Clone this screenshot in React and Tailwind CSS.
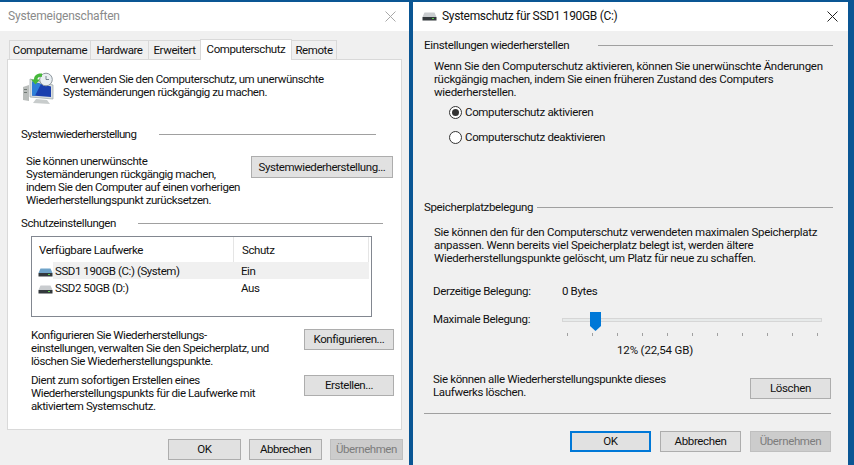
const font = "font-['Roboto',sans-serif] text-[11.5px] leading-[13px] text-[#111] whitespace-nowrap";

function Btn({ w, h = 'h-[21px]', children, disabled, primary, cls = '' }) {
  const tone = disabled
    ? 'bg-[#cccccc] border-[#bfbfbf] text-[#7c7c7c]'
    : primary
      ? 'bg-[#e1e1e1] border-[#0078d7] border-2 text-[#111]'
      : 'bg-[#e1e1e1] border-[#adadad] text-[#111]';
  return (
    <div className={`flex items-center justify-center border ${tone} ${w} ${h} ${cls} shrink-0`}>{children}</div>
  );
}

function Heading({ children, labelClass, lineClass, cls = '' }) {
  return (
    <div className={`flex items-center h-[13px] ${cls}`}>
      <span className={`shrink-0 ${labelClass}`}>{children}</span>
      <div className={`h-px bg-[#a0a0a0] ${lineClass}`} />
    </div>
  );
}

function Drive({ blue }) {
  const top = blue ? '#6fa3c9' : '#c9cccf';
  return (
    <svg width="15" height="9" viewBox="0 0 15 9" className="shrink-0">
      <path d="M2.5 0.5H12.5L14.5 5H0.5Z" fill={top} />
      <rect x="0.5" y="5" width="14" height="3.5" fill="#33383c" />
      <rect x="10" y="6" width="2" height="1" fill="#5fd04f" />
    </svg>
  );
}

function SysIcon() {
  return (
    <svg width="32" height="34" viewBox="0 0 32 34" className="shrink-0">
      <path d="M1 16 L7 14 V30 L1 29Z" fill="#b9bdbb" />
      <rect x="2" y="18" width="3" height="1" fill="#6f7773" />
      <rect x="2" y="21" width="3" height="1" fill="#6f7773" />
      <path d="M8 8 L31 14 V28 L8 26Z" fill="#d9dedf" stroke="#9aa3a6" strokeWidth="0.7" />
      <path d="M10 10.5 L29 15.5 V26 L10 24.5Z" fill="#1a3fae" />
      <path d="M10 10.5 L19 13 L13 24.7 L10 24.5Z" fill="#2f7fd8" />
      <path d="M14 28 L25 29 L28 33 L11 32Z" fill="#c8cccc" />
      <circle cx="24" cy="8.5" r="6.3" fill="#e9eef2" stroke="#8d979d" strokeWidth="1" />
      <path d="M24 5V8.5H27" fill="none" stroke="#5c6a75" strokeWidth="0.8" />
      <path d="M20 2.5 C15 2 12 4.5 12 8.5 L9 8.5 L13.5 13.5 L18 8.5 L15.5 8.5 C15.5 6.5 17 5.5 20 6Z" fill="#46b83a" />
    </svg>
  );
}

function Radio({ checked, children, cls = '' }) {
  return (
    <div className={`flex items-center ${cls}`}>
      <div className="w-[13px] h-[13px] rounded-full border border-[#333] bg-white flex items-center justify-center shrink-0">
        {checked && <div className="w-[7px] h-[7px] rounded-full bg-[#333]" />}
      </div>
      <span className="ml-[3px]">{children}</span>
    </div>
  );
}

function Close({ color }) {
  return (
    <svg width="11" height="11" viewBox="0 0 11 11" className="shrink-0">
      <path d="M0.5 0.5L10.5 10.5M10.5 0.5L0.5 10.5" stroke={color} strokeWidth="1" fill="none" />
    </svg>
  );
}

function Tab({ children, w, active }) {
  return active ? (
    <div className={`${w} h-[21px] bg-white border border-b-0 border-[#d9d9d9] -ml-px flex items-center justify-center relative z-10 -mb-px pb-[2px]`}>{children}</div>
  ) : (
    <div className={`${w} h-[19px] bg-[#f0f0f0] border border-b-0 border-[#d9d9d9] -ml-px flex items-center justify-center`}>{children}</div>
  );
}

function LeftWindow() {
  return (
    <div className="w-[409px] h-full flex flex-col shrink-0 tracking-[-0.43px]">
      <div className="h-[29px] bg-white flex items-center justify-between pl-[8px] pr-[13px] shrink-0">
        <span className="text-[#8a8a8a] text-[12px] tracking-[-0.2px]">Systemeigenschaften</span>
        <Close color="#a8a8a8" />
      </div>
      <div className="flex-1 bg-[#f0f0f0] pl-[7px] pr-[8px] pt-[7px] flex flex-col">
        <div className="flex items-end pl-[3px] h-[21px] shrink-0">
          <Tab w="w-[82px]">Computername</Tab>
          <Tab w="w-[59px]">Hardware</Tab>
          <Tab w="w-[53px]">Erweitert</Tab>
          <Tab w="w-[92px]" active>Computerschutz</Tab>
          <Tab w="w-[46px]">Remote</Tab>
        </div>
        <div className="w-[395px] h-[371px] bg-white border border-[#d9d9d9] flex flex-col shrink-0">
          <div className="flex items-start pl-[14px] pt-[11px] h-[61px] shrink-0">
            <SysIcon />
            <div className="ml-[9px] pt-[2px]">
              Verwenden Sie den Computerschutz, um unerwünschte<br />
              Systemänderungen rückgängig zu machen.
            </div>
          </div>
          <Heading cls="pl-[13px] mt-[7px] tracking-[-0.6px]" labelClass="w-[138px]" lineClass="w-[217px]">Systemwiederherstellung</Heading>
          <div className="flex justify-between pl-[18px] pr-[8px] mt-[9px] items-start">
            <div className="pt-[5px]">
              Sie können unerwünschte<br />
              Systemänderungen rückgängig machen,<br />
              indem Sie den Computer auf einen vorherigen<br />
              Wiederherstellungspunkt zurücksetzen.
            </div>
            <Btn w="w-[142px]" h="h-[22px]" cls="mt-[6px]">Systemwiederherstellung...</Btn>
          </div>
          <Heading cls="pl-[13px] mt-[10px]" labelClass="w-[117px]" lineClass="w-[245px]">Schutzeinstellungen</Heading>
          <div className="ml-[23px] mt-[6px] w-[341px] h-[81px] border border-[#828790] bg-white shrink-0 flex flex-col">
            <div className="flex h-[25px] items-center shrink-0 pr-[2px]">
              <div className="w-[202px] pl-[7px] pt-[2px] h-full flex items-center border-r border-[#e5e5e5]">Verfügbare Laufwerke</div>
              <div className="flex-1 pl-[8px] pt-[2px] h-full flex items-center border-r border-[#e5e5e5]">Schutz</div>
            </div>
            <div className="flex h-[17px] items-center">
              <div className="w-[21px] pl-[6px] pt-[3px] shrink-0"><Drive blue /></div>
              <div className="flex-1 flex items-center h-full bg-[#f0f0f0] mr-[2px] pt-[2px]">
                <div className="w-[188px] pl-[2px]">SSD1 190GB (C:) (System)</div>
                <div>Ein</div>
              </div>
            </div>
            <div className="flex h-[17px] items-center">
              <div className="w-[21px] pl-[6px] pt-[3px] shrink-0"><Drive /></div>
              <div className="flex-1 flex items-center h-full pt-[2px]">
                <div className="w-[188px] pl-[2px]">SSD2 50GB (D:)</div>
                <div>Aus</div>
              </div>
            </div>
          </div>
          <div className="flex justify-between pl-[23px] pr-[7px] mt-[12px] items-start">
            <div>
              Konfigurieren Sie Wiederherstellungs-<br />
              einstellungen, verwalten Sie den Speicherplatz, und<br />
              löschen Sie Wiederherstellungspunkte.
            </div>
            <Btn w="w-[90px]">Konfigurieren...</Btn>
          </div>
          <div className="flex justify-between pl-[23px] pr-[7px] mt-[6px] items-start">
            <div>
              Dient zum sofortigen Erstellen eines<br />
              Wiederherstellungspunkts für die Laufwerke mit<br />
              aktiviertem Systemschutz.
            </div>
            <Btn w="w-[90px]" cls="mt-[1px]">Erstellen...</Btn>
          </div>
        </div>
        <div className="flex justify-end gap-[8px] mt-[9px] w-[396px]">
          <Btn w="w-[73px]">OK</Btn>
          <Btn w="w-[73px]">Abbrechen</Btn>
          <Btn w="w-[73px]" disabled>Übernehmen</Btn>
        </div>
      </div>
    </div>
  );
}

const ticks = [0, 1, 2, 3, 4, 5, 6, 7, 8, 9, 10];

function RightWindow() {
  return (
    <div className="w-[435px] h-full flex flex-col shrink-0 ml-[4px] tracking-[-0.35px]">
      <div className="h-[29px] bg-white flex items-center pl-[9px] pr-[10px] shrink-0">
        <Drive />
        <span className="ml-[5px] text-[12px] tracking-[-0.33px] text-[#111]">Systemschutz für SSD1 190GB (C:)</span>
        <div className="ml-auto"><Close color="#222" /></div>
      </div>
      <div className="flex-1 bg-[#f0f0f0] pl-[11px] flex flex-col">
        <Heading cls="mt-[8px]" labelClass="w-[174px]" lineClass="w-[235px]">Einstellungen wiederherstellen</Heading>
        <div className="pl-[10px] mt-[8px] tracking-[-0.29px]">
          Wenn Sie den Computerschutz aktivieren, können Sie unerwünschte Änderungen<br />
          rückgängig machen, indem Sie einen früheren Zustand des Computers<br />
          wiederherstellen.
        </div>
        <Radio checked cls="pl-[25px] mt-[7px] h-[13px]">Computerschutz aktivieren</Radio>
        <Radio cls="pl-[25px] mt-[12px] h-[13px]">Computerschutz deaktivieren</Radio>
        <Heading cls="mt-[57px]" labelClass="w-[113px]" lineClass="w-[296px]">Speicherplatzbelegung</Heading>
        <div className="pl-[10px] mt-[12px] tracking-[-0.29px]">
          Sie können den für den Computerschutz verwendeten maximalen Speicherplatz<br />
          anpassen. Wenn bereits viel Speicherplatz belegt ist, werden ältere<br />
          Wiederherstellungspunkte gelöscht, um Platz für neue zu schaffen.
        </div>
        <div className="flex pl-[9px] mt-[20px] h-[13px]">
          <div className="w-[129px]">Derzeitige Belegung:</div>
          <div>0 Bytes</div>
        </div>
        <div className="flex items-center pl-[9px] mt-[12px] h-[20px]">
          <div className="w-[129px] pb-[2px]">Maximale Belegung:</div>
          <div className="relative w-[260px] h-[4px] bg-[#e7eaea] border border-[#d6d6d6]">
            <svg width="11" height="19" viewBox="0 0 11 19" className="absolute left-[27px] top-[-7px]">
              <path d="M0 0H11V14L5.5 19L0 14Z" fill="#0078d7" />
            </svg>
          </div>
        </div>
        <div className="flex justify-between pl-[143px] w-[394px] mt-[3px] h-[3px] items-start">
          {ticks.map((t) => (
            <div key={t} className="w-px h-[3px] bg-[#a0a0a0]" />
          ))}
        </div>
        <div className="pl-[193px] mt-[8px] h-[13px] tracking-[-0.15px]">12% (22,54 GB)</div>
        <div className="flex justify-between pl-[9px] w-[407px] mt-[16px] items-start">
          <div>
            Sie können alle Wiederherstellungspunkte dieses<br />
            Laufwerks löschen.
          </div>
          <Btn w="w-[81px]" cls="mt-[5px]">Löschen</Btn>
        </div>
        <div className="h-px bg-[#a0a0a0] w-[407px] mt-[14px]" />
        <div className="flex justify-end gap-[9px] mt-[17px] w-[407px]">
          <Btn w="w-[81px]" primary>OK</Btn>
          <Btn w="w-[81px]">Abbrechen</Btn>
          <Btn w="w-[81px]" disabled>Übernehmen</Btn>
        </div>
      </div>
    </div>
  );
}

export default function App() {
  return (
    <div className={`w-[854px] h-[465px] bg-[#0a5694] pt-[2px] flex overflow-hidden ${font}`}>
      <LeftWindow />
      <RightWindow />
    </div>
  );
}
